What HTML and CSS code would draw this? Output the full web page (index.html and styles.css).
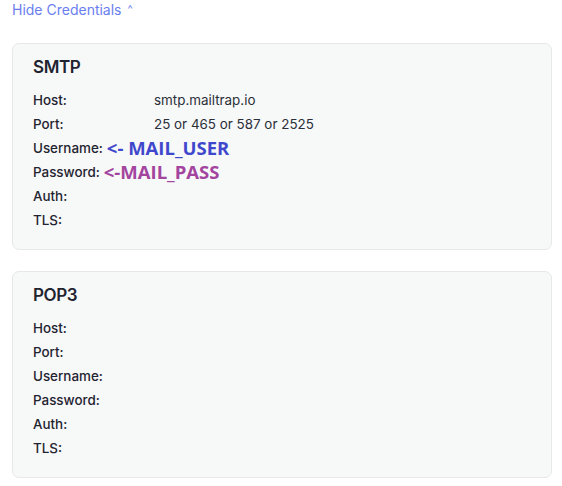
FILE: index.html
```html
<!DOCTYPE html>
<html>
<head>
<meta charset="utf-8">
<link rel="stylesheet" href="styles.css">
</head>
<body>
<div class="page">
  <a class="toggle">Hide Credentials <span class="caret">^</span></a>
  <section class="card">
    <h3 class="title">SMTP</h3>
    <div class="rows">
      <div class="row"><span class="label">Host:</span><span class="value">smtp.mailtrap.io</span></div>
      <div class="row"><span class="label">Port:</span><span class="value">25 or 465 or 587 or 2525</span></div>
      <div class="row"><span class="label short">Username:</span><span class="note blue">&lt;- MAIL_USER</span></div>
      <div class="row"><span class="label short">Password:</span><span class="note purple">&lt;-MAIL_PASS</span></div>
      <div class="row"><span class="label">Auth:</span></div>
      <div class="row"><span class="label">TLS:</span></div>
    </div>
  </section>
  <section class="card">
    <h3 class="title">POP3</h3>
    <div class="rows">
      <div class="row"><span class="label">Host:</span></div>
      <div class="row"><span class="label">Port:</span></div>
      <div class="row"><span class="label">Username:</span></div>
      <div class="row"><span class="label">Password:</span></div>
      <div class="row"><span class="label">Auth:</span></div>
      <div class="row"><span class="label">TLS:</span></div>
    </div>
  </section>
</div>
</body>
</html>
```
FILE: styles.css
```css
html, body {
  margin: 0;
  padding: 0;
  background: #ffffff;
}
.page {
  padding: 0 10px 0 12px;
  font-family: Inter, "Noto Sans", sans-serif;
  color: #1f2430;
}
.toggle {
  display: block;
  font-size: 14px;
  line-height: 20px;
  height: 20px;
  color: #6a7ef0;
  margin-bottom: 23px;
}
.caret {
  font-size: 11px;
  line-height: 0;
  position: relative;
  top: -2px;
  margin-left: 2px;
}
.card {
  background: #f7f8f8;
  border: 1px solid #e6e8e9;
  border-radius: 7px;
  padding: 10px 20px 17px;
  margin-bottom: 21px;
}
.title {
  margin: 0 0 8px;
  font-size: 17px;
  letter-spacing: -0.4px;
  line-height: 26px;
  font-weight: 600;
  color: #1f2430;
}
.rows {
  display: flex;
  flex-direction: column;
}
.row {
  display: flex;
  align-items: center;
  height: 24px;
  font-size: 13.4px;
}
.label {
  width: 121px;
  font-weight: 500;
  color: #1f2430;
}
.label.short {
  width: auto;
  margin-right: 4px;
}
.value {
  color: #2a2f38;
  font-weight: 400;
}
.note {
  font-family: "Open Sans", sans-serif;
  font-weight: 700;
  font-size: 18.5px;
  line-height: 24px;
}
.blue { color: #3f48cc; }
.purple { color: #a3449f; }
```
